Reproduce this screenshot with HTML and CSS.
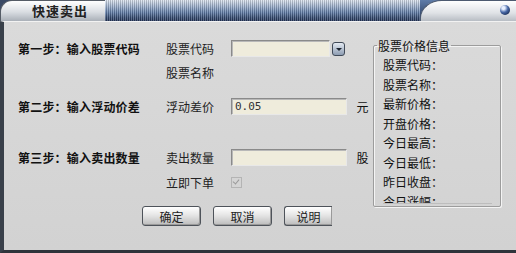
FILE: index.html
```html
<!DOCTYPE html>
<html lang="zh-CN">

<head>
    <meta charset="UTF-8">
    <meta name="viewport" content="width=device-width, initial-scale=1.0">
    <title>快速卖出</title>
    <link rel="stylesheet" href="styles.css">
</head>

<body>
    <div class="window">
        <div class="titlebar">
            <div class="title-tab">快速卖出</div>
            <div class="title-stripes"></div>
            <div class="title-end"><span class="ball"></span></div>
        </div>

        <div class="content">
            <div class="form">
                <div class="row row-1">
                    <span class="step">第一步：输入股票代码</span>
                    <span class="label">股票代码</span>
                    <div class="combo">
                        <span class="input short"></span>
                        <span class="drop"></span>
                    </div>
                </div>
                <div class="row row-2">
                    <span class="step"></span>
                    <span class="label">股票名称</span>
                </div>
                <div class="row row-3">
                    <span class="step">第二步：输入浮动价差</span>
                    <span class="label">浮动差价</span>
                    <span class="input value">0.05</span>
                    <span class="unit">元</span>
                </div>
                <div class="row row-4">
                    <span class="step">第三步：输入卖出数量</span>
                    <span class="label">卖出数量</span>
                    <span class="input"></span>
                    <span class="unit">股</span>
                </div>
                <div class="row row-5">
                    <span class="step"></span>
                    <span class="label">立即下单</span>
                    <span class="check"></span>
                </div>
                <div class="buttons">
                    <button>确定</button>
                    <button>取消</button>
                    <button class="cut">说明</button>
                </div>
            </div>

            <fieldset class="info">
                <legend>股票价格信息</legend>
                <div class="info-list">
                    <div>股票代码：</div>
                    <div>股票名称：</div>
                    <div>最新价格：</div>
                    <div>开盘价格：</div>
                    <div>今日最高：</div>
                    <div>今日最低：</div>
                    <div>昨日收盘：</div>
                    <div>今日涨幅：</div>
                </div>
            </fieldset>
        </div>
    </div>
</body>

</html>
```

FILE: styles.css
```css
body {
    margin: 0;
    font-family: "Noto Sans CJK SC", "DejaVu Sans", sans-serif;
    font-size: 12px;
    color: #111;
    background-color: #d4d4d4;
}

.window {
    width: 516px;
    height: 253px;
    display: flex;
    flex-direction: column;
    overflow: hidden;
}

/* title bar */
.titlebar {
    height: 21px;
    display: flex;
    background-color: #3a4a66;
}

.title-tab {
    width: 90px;
    padding-left: 14px;
    border-top-left-radius: 12px;
    border: 1px solid #555c66;
    border-right: none;
    border-bottom: none;
    background: linear-gradient(#ffffff, #d9dde2 55%, #aab0b8);
    font-weight: bold;
    font-size: 13px;
    line-height: 20px;
    letter-spacing: 1px;
    color: #222;
    text-align: center;
}

.title-stripes {
    flex: 1;
    background:
        repeating-linear-gradient(90deg, rgba(255, 255, 255, 0.22) 0 1px, rgba(0, 0, 0, 0.18) 1px 2px),
        linear-gradient(#dfe7f2, #9fb3d0 30%, #5f7ca8 60%, #33496f 85%, #25365a);
}

.title-end {
    width: 96px;
    position: relative;
    background: linear-gradient(#5f7ca8, #25365a);
}

.title-end::before {
    content: "";
    position: absolute;
    left: 0;
    top: 0;
    right: 0;
    bottom: 0;
    border-top-left-radius: 22px 18px;
    border-top: 1px solid #4d5a70;
    border-left: 1px solid #4d5a70;
    background: linear-gradient(#ffffff, #dfe2e6 60%, #b8bdc4);
}

.ball {
    position: absolute;
    right: 6px;
    top: 5px;
    width: 10px;
    height: 10px;
    border-radius: 50%;
    background: radial-gradient(circle at 35% 30%, #e8f0ff 0 15%, #4a6aa8 45%, #0c1d40 90%);
}

/* body */
.content {
    flex: 1;
    display: flex;
    border-left: 4px solid #39404a;
    border-bottom: 3px solid #2f343b;
    border-top: 1px solid #f2f2f2;
    background: linear-gradient(#dadada, #d2d2d2);
}

.form {
    width: 355px;
    padding-left: 14px;
    padding-top: 18px;
}

.row {
    display: grid;
    grid-template-columns: 148px 65px auto auto;
    align-items: center;
    height: 17px;
}

.row-2 {
    margin-top: 7px;
    height: 16px;
}

.row-3 {
    margin-top: 18px;
}

.row-4 {
    margin-top: 34px;
}

.row-5 {
    margin-top: 8px;
    height: 14px;
}

.step {
    font-weight: bold;
    letter-spacing: 0.2px;
}

.label {
    color: #222;
}

.combo {
    display: flex;
    align-items: center;
    gap: 2px;
}

.input {
    display: block;
    box-sizing: border-box;
    width: 116px;
    height: 17px;
    border: 1px solid #8a8a8a;
    border-right-color: #e8e8e8;
    border-bottom-color: #e8e8e8;
    box-shadow: inset 1px 1px 0 #b8b8b8;
    background-color: #efecdc;
}

.input.short {
    width: 99px;
}

.value {
    padding-left: 3px;
    font-family: "DejaVu Sans Mono", monospace;
    font-size: 11px;
    line-height: 15px;
    color: #333;
}

.drop {
    width: 13px;
    height: 14px;
    border: 1px solid #404a58;
    border-radius: 3px;
    box-sizing: border-box;
    background: linear-gradient(#e4eaf2, #8d9cb2);
    position: relative;
}

.drop::after {
    content: "";
    position: absolute;
    left: 3px;
    top: 5px;
    border-left: 3px solid transparent;
    border-right: 3px solid transparent;
    border-top: 3px solid #1c2430;
}

.unit {
    padding-left: 5px;
}

.check {
    width: 9px;
    height: 9px;
    border: 1px solid #b4b4b4;
    position: relative;
}

.check::after {
    content: "";
    position: absolute;
    left: 2px;
    top: 0;
    width: 3px;
    height: 5px;
    border-right: 1px solid #9a9a9a;
    border-bottom: 1px solid #9a9a9a;
    transform: rotate(40deg);
}

.buttons {
    display: flex;
    gap: 12px;
    margin-top: 18px;
    padding-left: 124px;
}

button {
    box-sizing: border-box;
    width: 59px;
    height: 20px;
    padding: 0;
    border: 1px solid #4e535a;
    border-radius: 3px;
    background: linear-gradient(#ffffff, #e6e6e6 45%, #bcbcbc);
    box-shadow: inset -1px -1px 0 #9a9a9a;
    font-family: inherit;
    font-size: 12px;
    color: #222;
}

button.cut {
    width: 48px;
    border-right: none;
    border-radius: 3px 0 0 3px;
}

/* price info group */
.info {
    box-sizing: border-box;
    width: 128px;
    height: 168px;
    margin: 17px 0 0 0;
    padding: 3px 0 0 9px;
    border: 1px solid #9c9c9c;
    border-radius: 2px;
    box-shadow: 1px 1px 0 #f4f4f4, inset 1px 1px 0 #f4f4f4;
}

.info legend {
    padding: 0 1px;
    margin-left: -6px;
    line-height: 13px;
}

.info-list {
    height: 148px;
    overflow: hidden;
    line-height: 19.5px;
    border-bottom: 1px solid #bdbdbd;
    margin-right: 8px;
}
```
